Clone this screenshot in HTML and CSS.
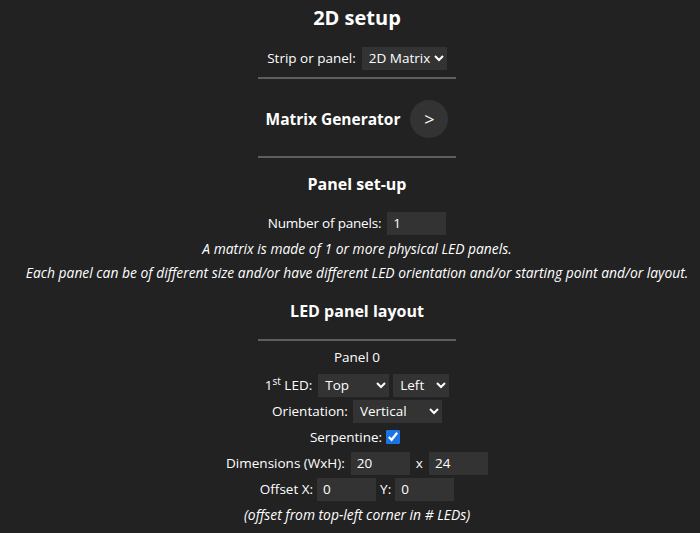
FILE: index.html
```html
<!DOCTYPE html>
<html>
<head>
<meta charset="utf-8">
<link rel="stylesheet" href="styles.css">
</head>
<body>
<main class="page">
  <h2 class="title">2D setup</h2>
  <div class="row row-strip">
    <span>Strip or panel:</span>
    <select class="sel"><option>1D Strip</option><option selected>2D Matrix</option></select>
  </div>
  <hr class="sep sep-1">
  <div class="gen-row">
    <span class="gen-label">Matrix Generator</span>
    <span class="gen-btn">&gt;</span>
  </div>
  <hr class="sep sep-2">
  <h3 class="sub sub-setup">Panel set-up</h3>
  <div class="row row-count">
    <span>Number of panels:</span>
    <input class="num" type="text" value="1">
  </div>
  <p class="note note-1">A matrix is made of 1 or more physical LED panels.</p>
  <p class="note note-2">Each panel can be of different size and/or have different LED orientation and/or starting point and/or layout.</p>
  <h3 class="sub sub-layout">LED panel layout</h3>
  <hr class="sep sep-3">
  <div class="panel-name">Panel 0</div>
  <div class="row">
    <span>1<sup>st</sup> LED:</span>
    <select class="sel sel-top"><option>Top</option><option>Bottom</option></select>
    <select class="sel sel-left"><option>Left</option><option>Right</option></select>
  </div>
  <div class="row">
    <span>Orientation:</span>
    <select class="sel sel-or"><option>Horizontal</option><option selected>Vertical</option></select>
  </div>
  <div class="row row-serp">
    <span>Serpentine:</span>
    <input class="chk" type="checkbox" checked>
  </div>
  <div class="row">
    <span>Dimensions (WxH):</span>
    <input class="num" type="text" value="20">
    <span class="x">x</span>
    <input class="num" type="text" value="24">
  </div>
  <div class="row row-offset">
    <span>Offset X:</span>
    <input class="num" type="text" value="0">
    <span class="ylab">Y:</span>
    <input class="num" type="text" value="0">
  </div>
  <p class="note note-3">(offset from top-left corner in # LEDs)</p>
</main>
</body>
</html>
```
FILE: styles.css
```css
html, body {
  margin: 0;
  padding: 0;
  background: #222;
}
body {
  color: #fff;
  font-family: "Open Sans", "DejaVu Sans", sans-serif;
  font-size: 13.5px;
  color-scheme: dark;
}
.page {
  margin-left: 14px;
  display: flex;
  flex-direction: column;
  align-items: center;
  text-align: center;
}
.title {
  margin: 5px 0 0;
  font-size: 20px;
  line-height: 26px;
  font-weight: 700;
}
.row {
  display: flex;
  align-items: center;
  justify-content: center;
  height: 26px;
  gap: 6px;
  white-space: nowrap;
}
.row-strip {
  margin-top: 14px;
}
.sel {
  height: 23px;
  background: #333;
  color: #fff;
  border: none;
  border-radius: 0;
  font-family: inherit;
  font-size: 13.5px;
  padding: 0 0 0 3px;
  outline: none;
}
.sel-left { margin-left: -2px; }
.sel-or { margin-left: -1px; }
.num {
  width: 59px;
  height: 23px;
  box-sizing: border-box;
  background: #333;
  color: #fff;
  border: none;
  border-radius: 0;
  font-family: inherit;
  font-size: 13.5px;
  padding: 0 6px;
  outline: none;
}
.row-count span { letter-spacing: -0.2px; }
.sep {
  width: 198px;
  height: 0;
  border: 0;
  border-top: 2px solid #5e5e5e;
  margin: 0;
}
.sep-1 { margin-top: 6px; }
.gen-row {
  display: flex;
  align-items: center;
  gap: 10px;
  height: 38px;
  margin-top: 21px;
}
.gen-label {
  font-weight: 700;
  font-size: 15.5px;
}
.gen-btn {
  width: 38px;
  height: 38px;
  border-radius: 50%;
  background: #333;
  display: flex;
  align-items: center;
  justify-content: center;
  font-size: 18px;
}
.sep-2 { margin-top: 18px; }
.sub {
  margin: 0;
  font-size: 16px;
  line-height: 20px;
  font-weight: 700;
}
.sub-setup { margin-top: 16px; margin-bottom: 16px; }
.note {
  margin: 0;
  font-style: italic;
  font-size: 13.85px;
  line-height: 24px;
}
.note-1 { margin-top: 1px; }
.sub-layout { margin-top: 16px; }
.sep-3 { margin-top: 18px; }
.panel-name {
  margin-top: 6px;
  line-height: 20px;
  margin-bottom: 5px;
}
sup {
  font-size: 10px;
  line-height: 0;
  vertical-align: 5px;
}
.row-serp { gap: 4px; margin-right: 4px; }
.chk {
  width: 14px;
  height: 14px;
  margin: 0;
  accent-color: #1a73e8;
}
.row-offset { gap: 4px; }
.ylab { margin-left: 0; }
.note-3 { margin-top: 1px; }
```
